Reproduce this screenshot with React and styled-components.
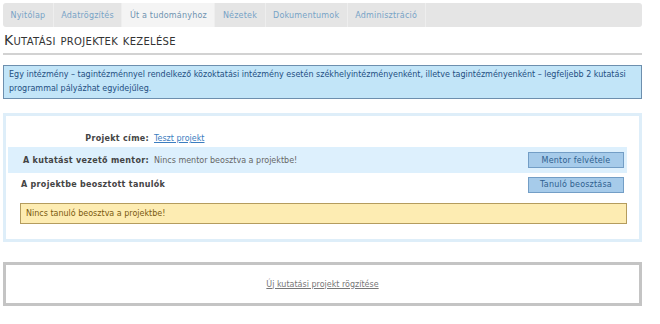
import React from "react";
import styled, { createGlobalStyle } from "styled-components";

const GlobalStyle = createGlobalStyle`
  body {
    margin: 0;
    background: #ffffff;
    font-family: "DejaVu Sans", Verdana, sans-serif;
    color: #444;
  }
`;

const Page = styled.div`
  width: 639px;
  padding: 3px 0 0 3px;
`;

const Tabs = styled.ul`
  display: flex;
  margin: 0;
  padding: 0;
  list-style: none;
  height: 24px;
  background: #e5e5e5;
  border-radius: 3px;
  overflow: hidden;
`;

const Tab = styled.li`
  display: flex;
  align-items: center;
  padding: 0 7.5px;
  font-size: 8px;
  letter-spacing: 0.2px;
  color: ${(p) => (p.$active ? "#6f93b0" : "#77a3c6")};
  background: ${(p) => (p.$active ? "#f4f4f4" : "transparent")};
  border-right: 1px solid #eeeeee;
  cursor: pointer;
`;

const Heading = styled.h1`
  margin: 0;
  padding: 5px 0 4px 1px;
  font-size: 14px;
  line-height: 17px;
  font-weight: normal;
  font-variant: small-caps;
  letter-spacing: 0.3px;
  color: #333;
  border-bottom: 2px solid #d2d2d2;
`;

const Info = styled.div`
  margin-top: 10px;
  padding: 2px 5px;
  font-size: 8px;
  line-height: 14px;
  color: #1f4f82;
  background: #c2e5f8;
  border: 1px solid #6d8fae;
`;

const Panel = styled.div`
  margin-top: 14px;
  padding: 14px 12px 15px 2px;
  border: 3px solid #deeef9;
`;

const Row = styled.div`
  display: flex;
  align-items: center;
  min-height: ${(p) => p.$h || 17}px;
  padding: 0 3px 0 13px;
  background: ${(p) => (p.$tint ? "#ddf0fd" : "transparent")};
`;

const Label = styled.span`
  flex-shrink: 0;
  width: ${(p) => (p.$wide ? "auto" : "128px")};
  text-align: ${(p) => (p.$wide ? "left" : "right")};
  white-space: nowrap;
  font-size: 8px;
  font-weight: bold;
  letter-spacing: 0.3px;
  color: #444;
`;

const Value = styled.span`
  flex: 1;
  margin-left: 5px;
  font-size: 8px;
  color: #666;
`;

const ValueLink = styled.a`
  color: #3b7dc0;
  text-decoration: underline;
  cursor: pointer;
`;

const Button = styled.button`
  width: 96px;
  height: 16px;
  padding: 0;
  font-family: inherit;
  font-size: 8px;
  letter-spacing: 0.2px;
  color: #2f5f8f;
  background: #a6cbea;
  border: 1px solid #739ec6;
  cursor: pointer;
`;

const Notice = styled.div`
  margin: 7px 0 0 12px;
  padding: 0 5px;
  height: 19px;
  display: flex;
  align-items: center;
  font-size: 8px;
  color: #7a5a10;
  background: #fdecb2;
  border: 1px solid #b49c5e;
`;

const NewBox = styled.div`
  margin-top: 20px;
  height: 38px;
  display: flex;
  align-items: center;
  justify-content: center;
  border: 3px solid #c4c4c4;
`;

const NewLink = styled.a`
  font-size: 8px;
  color: #777;
  text-decoration: underline;
  cursor: pointer;
`;

const tabs = [
  "Nyitólap",
  "Adatrögzítés",
  "Út a tudományhoz",
  "Nézetek",
  "Dokumentumok",
  "Adminisztráció",
];

export default function App() {
  return (
    <>
      <GlobalStyle />
      <Page>
        <Tabs>
          {tabs.map((t) => (
            <Tab key={t} $active={t === "Út a tudományhoz"}>
              {t}
            </Tab>
          ))}
        </Tabs>
        <Heading>Kutatási projektek kezelése</Heading>
        <Info>
          Egy intézmény – tagintézménnyel rendelkező közoktatási intézmény esetén
          székhelyintézményenként, illetve tagintézményenként – legfeljebb 2 kutatási
          programmal pályázhat egyidejűleg.
        </Info>
        <Panel>
          <Row>
            <Label>Projekt címe:</Label>
            <Value>
              <ValueLink>Teszt projekt</ValueLink>
            </Value>
          </Row>
          <Row $tint $h={26}>
            <Label>A kutatást vezető mentor:</Label>
            <Value>Nincs mentor beosztva a projektbe!</Value>
            <Button>Mentor felvétele</Button>
          </Row>
          <Row $h={23}>
            <Label $wide>A projektbe beosztott tanulók</Label>
            <Value />
            <Button>Tanuló beosztása</Button>
          </Row>
          <Notice>Nincs tanuló beosztva a projektbe!</Notice>
        </Panel>
        <NewBox>
          <NewLink>Új kutatási projekt rögzítése</NewLink>
        </NewBox>
      </Page>
    </>
  );
}
